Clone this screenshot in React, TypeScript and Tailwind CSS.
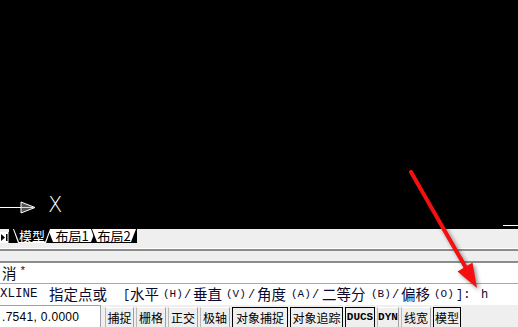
import React from "react";

const cjk = '"Noto Sans CJK SC", "Liberation Sans", sans-serif';
const mono = '"Liberation Mono", "Noto Sans CJK SC", monospace';

type Seg = { t: string; w: string; k: "x" | "c" | "p" | "s" };

// command line pieces, each in a fixed-width box so the columns line up
const segs: Seg[] = [
  { t: "XLINE", w: "w-[49px]", k: "x" },
  { t: "指定点或", w: "w-[74px]", k: "c" },
  { t: "[", w: "w-[7px]", k: "s" },
  { t: "水平", w: "w-[33px]", k: "c" },
  { t: "(H)", w: "w-[21px]", k: "p" },
  { t: "/", w: "w-[9px]", k: "s" },
  { t: "垂直", w: "w-[33px]", k: "c" },
  { t: "(V)", w: "w-[22px]", k: "p" },
  { t: "/", w: "w-[9px]", k: "s" },
  { t: "角度", w: "w-[34px]", k: "c" },
  { t: "(A)", w: "w-[21px]", k: "p" },
  { t: "/", w: "w-[10px]", k: "s" },
  { t: "二等分", w: "w-[49px]", k: "c" },
  { t: "(B)", w: "w-[21px]", k: "p" },
  { t: "/", w: "w-[9px]", k: "s" },
  { t: "偏移", w: "w-[33px]", k: "c" },
  { t: "(O)", w: "w-[22px]", k: "p" },
  { t: "]:", w: "w-[25px]", k: "s" },
  { t: "h", w: "w-[10px]", k: "s" },
];

const segClass: Record<Seg["k"], string> = {
  x: "text-[12.5px]",
  c: "text-[14.5px]",
  p: "text-[11px]",
  s: "text-[12px]",
};

const buttons = [
  { label: "捕捉", w: "w-[29px]", on: false },
  { label: "栅格", w: "w-[30px]", on: false },
  { label: "正交", w: "w-[30px]", on: false },
  { label: "极轴", w: "w-[30px]", on: false },
  { label: "对象捕捉", w: "w-[56px]", on: true },
  { label: "对象追踪", w: "w-[53px]", on: true },
  { label: "DUCS", w: "w-[30px]", on: true, latin: true },
  { label: "DYN", w: "w-[22px]", on: false, latin: true },
  { label: "线宽", w: "w-[30px]", on: false },
  { label: "模型", w: "w-[28px]", on: true },
];

const trap = "[clip-path:polygon(0_0,100%_0,calc(100%_-_5px)_100%,5px_100%)]";

function Tab({ label, active, w }: { label: string; active?: boolean; w: string }) {
  return (
    <div className={`${w} h-[14px] ${trap} ${active ? "bg-white relative z-10" : "bg-black"} px-px pb-px`}>
      <div
        className={`h-full ${trap} ${active ? "bg-black text-white" : "bg-white text-black"} flex items-center justify-center text-[13px] leading-none`}
        style={{ fontFamily: cjk }}
      >
        {label}
      </div>
    </div>
  );
}

export default function App() {
  return (
    <div className="relative w-[518px] h-[327px] overflow-hidden flex flex-col bg-white">
      {/* drawing area */}
      <div className="relative h-[229px] bg-black shrink-0">
        <svg className="absolute left-0 top-[198px]" width="40" height="20" viewBox="0 0 40 20">
          <line x1="0" y1="9.5" x2="21" y2="9.5" stroke="#fff" strokeWidth="1" />
          <polygon points="21,4 35,9.5 21,15" fill="#555" stroke="#fff" strokeWidth="1" />
          <line x1="21" y1="9.5" x2="35" y2="9.5" stroke="#ddd" strokeWidth="1" />
        </svg>
        <span
          className="absolute left-[48px] top-[195px] text-white text-[21px] leading-none font-extralight"
          style={{ fontFamily: '"DejaVu Sans", sans-serif' }}
        >
          X
        </span>
        <div className="absolute right-0 top-[225px] w-[15px] h-px bg-white" />
      </div>

      {/* layout tabs */}
      <div className="h-[19px] bg-[#efefef] flex items-start shrink-0">
        <div className="w-[9px] h-[11px] mt-[3px] bg-white border-r border-[#808080] flex items-center justify-center">
          <svg width="7" height="7" viewBox="0 0 7 7">
            <polygon points="0,0 4,3.5 0,7" fill="#000" />
            <rect x="5" y="0" width="1.5" height="7" fill="#000" />
          </svg>
        </div>
        <div className="h-[14px] bg-black pl-[4px] w-[128px] flex">
          <Tab label="模型" active w="w-[38px]" />
          <div className="-ml-[4px]">
            <Tab label="布局1" w="w-[50px]" />
          </div>
          <div className="-ml-[6px]">
            <Tab label="布局2" w="w-[46px]" />
          </div>
        </div>
      </div>

      {/* splitter */}
      <div className="h-px bg-white shrink-0" />
      <div className="h-[2px] bg-[#8c8c8c] shrink-0" />
      <div className="h-[10px] bg-[#efefef] shrink-0" />
      <div className="h-[2px] bg-[#8c8c8c] shrink-0" />

      {/* command window */}
      <div className="h-[20px] flex items-center pl-[2px] text-[#111] shrink-0" style={{ fontFamily: cjk }}>
        <span className="text-[14.5px] leading-none">消</span>
        <span className="text-[11px] leading-none ml-[3px] -mt-[3px]" style={{ fontFamily: mono }}>
          *
        </span>
      </div>
      <div className="h-px bg-[#a8a8a8] shrink-0" />
      <div className="h-[21px] flex items-center whitespace-nowrap text-[#0a0a30] shrink-0">
        {segs.map((s, i) => (
          <span
            key={i}
            className={`${s.w} shrink-0 leading-none ${segClass[s.k]}`}
            style={{ fontFamily: s.k === "c" ? cjk : mono }}
          >
            {s.t}
          </span>
        ))}
      </div>

      {/* status bar */}
      <div className="h-[22px] bg-[#efefef] flex items-start shrink-0">
        <div
          className="w-[101px] h-full bg-white border-t border-r border-[#a0a0a0] flex items-center pl-[2px] text-[12px] text-black tracking-[0.3px]"
          style={{ fontFamily: '"Liberation Sans", sans-serif' }}
        >
          .7541, 0.0000
        </div>
        <div className="flex gap-[2px] ml-[4px] mt-[2px]">
          {buttons.map((b) => (
            <div
              key={b.label}
              className={`${b.w} h-[21px] flex items-center justify-center border ${
                b.on ? "border-black" : "border-[#a0a0a0] border-t-white border-l-[#b8b8b8]"
              } text-black leading-none ${b.latin ? "text-[11px] font-bold" : "text-[12px]"}`}
              style={{ fontFamily: b.latin ? mono : cjk }}
            >
              {b.label}
            </div>
          ))}
        </div>
      </div>

      {/* annotation arrow */}
      <svg
        className="absolute inset-0 pointer-events-none drop-shadow-[2px_2px_2px_rgba(0,0,0,0.45)]"
        width="518"
        height="327"
        viewBox="0 0 518 327"
      >
        <line x1="411" y1="172" x2="466" y2="268" stroke="#f41010" strokeWidth="4" strokeLinecap="round" />
        <polygon points="477,288 457.5,271.5 472.5,262.5" fill="#f41010" />
      </svg>
    </div>
  );
}
